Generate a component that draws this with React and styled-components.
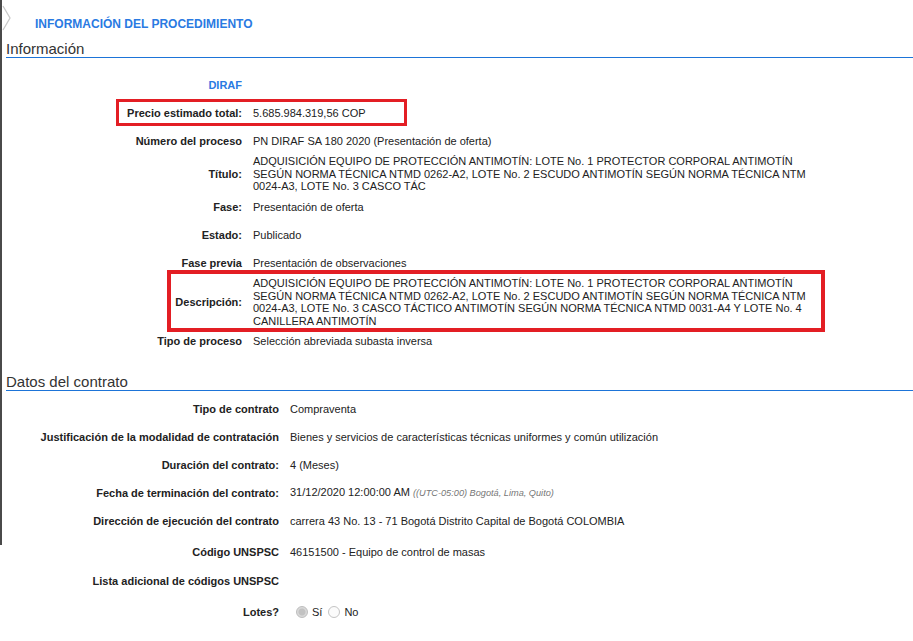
import React from "react";
import styled, { createGlobalStyle } from "styled-components";

const GlobalStyle = createGlobalStyle`
  html, body { margin: 0; padding: 0; background: #fff; }
  body { font-family: "Liberation Sans", Arial, sans-serif; color: #222; }
  * { box-sizing: border-box; }
`;

const Page = styled.div`
  position: relative;
  display: flex;
  align-items: flex-start;
  width: 913px;
  min-height: 641px;
  overflow: hidden;
`;

const SideEdge = styled.div`
  flex-shrink: 0;
  width: 2px;
  height: 545px;
  background: #4a4a4a;
`;

const Chevron = styled.svg`
  position: absolute;
  left: 2px;
  top: 4px;
`;

const Main = styled.main`
  flex: 1;
  min-width: 0;
  padding-left: 4px;
`;

const PageTitle = styled.h1`
  margin: 17px 0 0 29px;
  font-size: 12px;
  line-height: 14px;
  font-weight: bold;
  color: #2a7ae2;
`;

const SectionTitle = styled.h2`
  margin: ${(p) => p.$mt}px 0 0;
  font-size: 15px;
  line-height: 17px;
  font-weight: normal;
  color: #333;
  border-bottom: 1px solid #1d74d8;
`;

const FieldList = styled.div`
  display: flex;
  flex-direction: column;
  margin-top: ${(p) => p.$mt}px;
`;

const Row = styled.div`
  position: relative;
  display: grid;
  grid-template-columns: ${(p) => p.$labelW}px 570px;
  column-gap: 11px;
  align-items: center;
  height: ${(p) => p.$h || 28}px;
`;

const Label = styled.div`
  text-align: right;
  font-size: 11px;
  line-height: 12.5px;
  font-weight: bold;
  color: ${(p) => (p.$accent ? "#2a7ae2" : "#222")};
`;

const Value = styled.div`
  font-size: 11px;
  line-height: 12.5px;
  color: #222;
`;

const TimeZone = styled.span`
  font-size: 9.2px;
  font-style: italic;
  color: #777;
`;

const Highlight = styled.div`
  position: absolute;
  left: ${(p) => p.$x}px;
  top: ${(p) => p.$y}px;
  width: ${(p) => p.$w}px;
  height: ${(p) => p.$h}px;
  border: ${(p) => p.$b}px solid #e31e24;
  pointer-events: none;
`;

const RadioGroup = styled.div`
  display: flex;
  align-items: center;
  font-size: 11px;
  color: #222;
`;

const Radio = styled.input.attrs({ type: "radio", disabled: true })`
  appearance: none;
  -webkit-appearance: none;
  margin: 0 4px 0 6px;
  width: 12px;
  height: 12px;
  border-radius: 50%;
  border: 1px solid #c4c4c4;
  background: #fbfbfb;
  &:checked {
    background: radial-gradient(circle, #c2c2c2 0 3px, #d9d9d9 4px);
    border-color: #bdbdbd;
  }
`;

const infoRows = [
  { label: "Precio estimado total:", value: "5.685.984.319,56 COP", box: { x: 110, y: 0, w: 291, h: 27, b: 3 } },
  { label: "Número del proceso", value: "PN DIRAF SA 180 2020 (Presentación de oferta)" },
  {
    label: "Título:",
    h: 38,
    value:
      "ADQUISICIÓN EQUIPO DE PROTECCIÓN ANTIMOTÍN: LOTE No. 1 PROTECTOR CORPORAL ANTIMOTÍN SEGÚN NORMA TÉCNICA NTMD 0262-A2, LOTE No. 2 ESCUDO ANTIMOTÍN SEGÚN NORMA TÉCNICA NTM 0024-A3, LOTE No. 3 CASCO TÁC",
  },
  { label: "Fase:", value: "Presentación de oferta" },
  { label: "Estado:", value: "Publicado" },
  { label: "Fase previa", value: "Presentación de observaciones" },
  {
    label: "Descripción:",
    h: 50,
    value:
      "ADQUISICIÓN EQUIPO DE PROTECCIÓN ANTIMOTÍN: LOTE No. 1 PROTECTOR CORPORAL ANTIMOTÍN SEGÚN NORMA TÉCNICA NTMD 0262-A2, LOTE No. 2 ESCUDO ANTIMOTÍN SEGÚN NORMA TÉCNICA NTM 0024-A3, LOTE No. 3 CASCO TÁCTICO ANTIMOTÍN SEGÚN NORMA TÉCNICA NTMD 0031-A4 Y LOTE No. 4 CANILLERA ANTIMOTÍN",
    box: { x: 161, y: -7, w: 658, h: 62, b: 4 },
  },
  { label: "Tipo de proceso", value: "Selección abreviada subasta inversa" },
];

const contractRows = [
  { label: "Tipo de contrato", value: "Compraventa" },
  {
    label: "Justificación de la modalidad de contratación",
    value: "Bienes y servicios de características técnicas uniformes y común utilización",
  },
  { label: "Duración del contrato:", value: "4 (Meses)" },
  {
    label: "Fecha de terminación del contrato:",
    value: (
      <>
        31/12/2020 12:00:00 AM <TimeZone>((UTC-05:00) Bogotá, Lima, Quito)</TimeZone>
      </>
    ),
  },
  { label: "Dirección de ejecución del contrato", value: "carrera 43 No. 13 - 71 Bogotá Distrito Capital de Bogotá COLOMBIA" },
  { label: "Código UNSPSC", value: "46151500 - Equipo de control de masas", h: 34 },
  { label: "Lista adicional de códigos UNSPSC", value: "", h: 24 },
];

export default function App() {
  return (
    <>
      <GlobalStyle />
      <Page>
        <SideEdge />
        <Chevron width="10" height="28" viewBox="0 0 10 28">
          <polyline points="1,2 8,14 1,26" fill="none" stroke="#c9c9c9" strokeWidth="1.3" />
        </Chevron>
        <Main>
          <PageTitle>INFORMACIÓN DEL PROCEDIMIENTO</PageTitle>
          <SectionTitle $mt={9}>Información</SectionTitle>
          <FieldList $mt={13}>
            <Row $labelW={236}>
              <Label $accent>DIRAF</Label>
              <Value />
            </Row>
            {infoRows.map((r) => (
              <Row key={r.label} $labelW={236} $h={r.h}>
                <Label>{r.label}</Label>
                <Value>{r.value}</Value>
                {r.box && <Highlight $x={r.box.x} $y={r.box.y} $w={r.box.w} $h={r.box.h} $b={r.box.b} />}
              </Row>
            ))}
          </FieldList>
          <SectionTitle $mt={18}>Datos del contrato</SectionTitle>
          <FieldList $mt={4}>
            {contractRows.map((r) => (
              <Row key={r.label} $labelW={273} $h={r.h}>
                <Label>{r.label}</Label>
                <Value>{r.value}</Value>
              </Row>
            ))}
            <Row $labelW={273} $h={38}>
              <Label>Lotes?</Label>
              <RadioGroup>
                <Radio name="lotes" defaultChecked />
                Sí
                <Radio name="lotes" />
                No
              </RadioGroup>
            </Row>
          </FieldList>
        </Main>
      </Page>
    </>
  );
}
